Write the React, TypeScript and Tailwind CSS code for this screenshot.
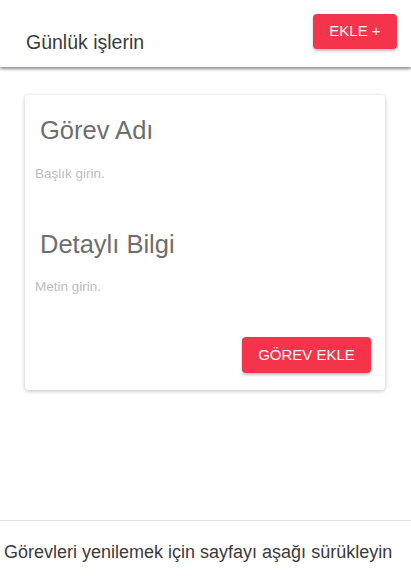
export default function App() {
  return (
    <div className="min-h-[577px] bg-white font-['Liberation_Sans',Arial,sans-serif] flex flex-col">
      {/* Üst bar */}
      <header className="h-[67px] bg-white flex items-start justify-between shadow-[0_2px_3px_rgba(0,0,0,0.45)] relative z-10">
        <h1 className="ml-[26px] mt-[31px] text-[19.5px] leading-[22px] text-[#3a3a3a]">Günlük işlerin</h1>
        <button className="mt-[14px] mr-[14px] w-[84px] h-[35px] rounded-[4px] bg-[#f5334a] text-white text-[15px] shadow-[0_2px_3px_rgba(0,0,0,0.25)]">
          EKLE +
        </button>
      </header>

      {/* Görev formu */}
      <div className="mx-[25px] mt-[28px] w-[360px] h-[295px] bg-white rounded-[4px] shadow-[0_1px_4px_rgba(0,0,0,0.25)] px-[10px] pt-[20px]">
        <h2 className="pl-[5px] text-[25.5px] leading-[30px] text-[#6e6e6e]">Görev Adı</h2>
        <input
          placeholder="Başlık girin."
          className="mt-[21px] w-full text-[13.5px] leading-[14px] outline-none placeholder:text-[#bdbdbd]"
        />
        <h2 className="mt-[44px] pl-[5px] text-[25.5px] leading-[30px] text-[#6e6e6e]">Detaylı Bilgi</h2>
        <input
          placeholder="Metin girin."
          className="mt-[20px] w-full text-[13.5px] leading-[14px] outline-none placeholder:text-[#bdbdbd]"
        />
        <div className="flex justify-end mt-[39px] pr-[4px]">
          <button className="w-[129px] h-[36px] rounded-[4px] bg-[#f5334a] text-white text-[15px] shadow-[0_2px_3px_rgba(0,0,0,0.25)]">
            GÖREV EKLE
          </button>
        </div>
      </div>

      {/* Alt bilgi */}
      <div className="mt-[130px] border-t border-[#e0e0e0] pt-[20px] pl-[4px]">
        <p className="text-[18px] leading-[22px] text-[#3a3a3a]">
          Görevleri yenilemek için sayfayı aşağı sürükleyin
        </p>
      </div>
    </div>
  );
}
